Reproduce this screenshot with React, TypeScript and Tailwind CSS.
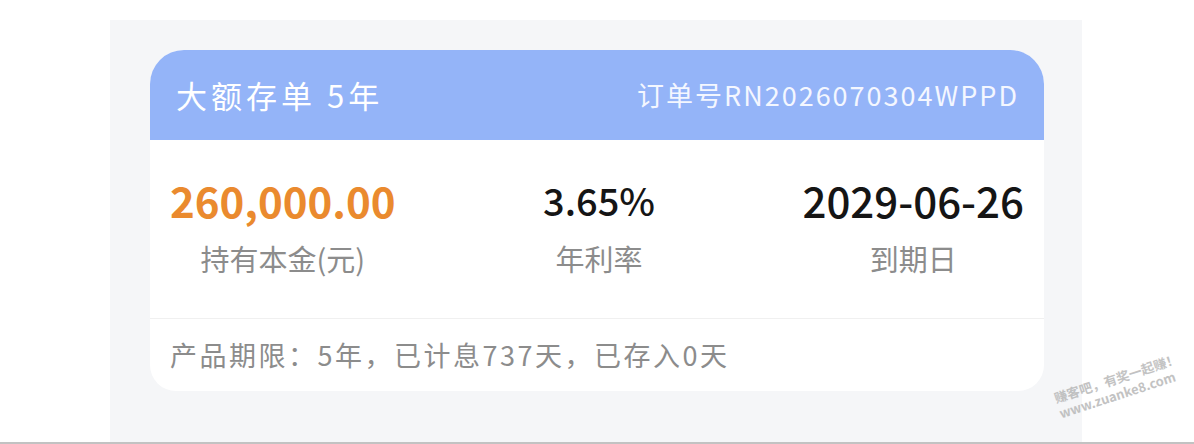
const font = { fontFamily: '"Noto Sans CJK SC", "Noto Sans", sans-serif' };

const Stat = ({ value, label, valueClass }: { value: string; label: string; valueClass: string }) => (
  <div className="flex flex-col items-center">
    <div className={`leading-[52px] ${valueClass}`}>{value}</div>
    <div className="mt-[14px] text-[29px] leading-[36px] text-[#8c8c8c]">{label}</div>
  </div>
);

const App = () => {
  return (
    <div className="relative h-[444px] w-[1194px] overflow-hidden bg-white" style={font}>
      <div className="ml-[110px] mt-[20px] h-[422px] w-[972px] bg-[#f5f6f8] pt-[30px]">
        <div className="ml-[40px] w-[894px] overflow-hidden rounded-t-[34px] rounded-b-[26px] bg-white">
          <div className="flex h-[90px] items-center justify-between bg-[#94b4f8] pl-[26px] pr-[25px] text-white">
            <div className="text-[31px] tracking-[4px]">大额存单 5年</div>
            <div className="text-[27px] tracking-[2px] text-[#f4f7ff]">订单号RN2026070304WPPD</div>
          </div>

          <div className="flex justify-between px-[20px] pb-[42px] pt-[34px]">
            <Stat value="260,000.00" label="持有本金(元)" valueClass="text-[42px] font-bold text-[#ea8a2e]" />
            <Stat value="3.65%" label="年利率" valueClass="text-[38px] font-medium text-[#151515]" />
            <Stat value="2029-06-26" label="到期日" valueClass="text-[42px] font-medium text-[#151515]" />
          </div>

          <div className="h-px bg-[#f0f0f0]" />

          <div className="flex h-[72px] items-center px-[20px] text-[27px] tracking-[2.5px] text-[#8c8c8c]">
            产品期限：5年，已计息737天，已存入0天
          </div>
        </div>
      </div>
      <div className="h-[2px] w-full bg-[#c2c2c2]" />

      <div className="absolute left-[1054px] top-[370px] -rotate-[18deg] whitespace-pre-line text-[13px] font-bold leading-[16px] text-[#b4b4b4] opacity-80">
        {"赚客吧，有奖一起赚！\n www.zuanke8.com"}
      </div>
    </div>
  );
};

export default App;
